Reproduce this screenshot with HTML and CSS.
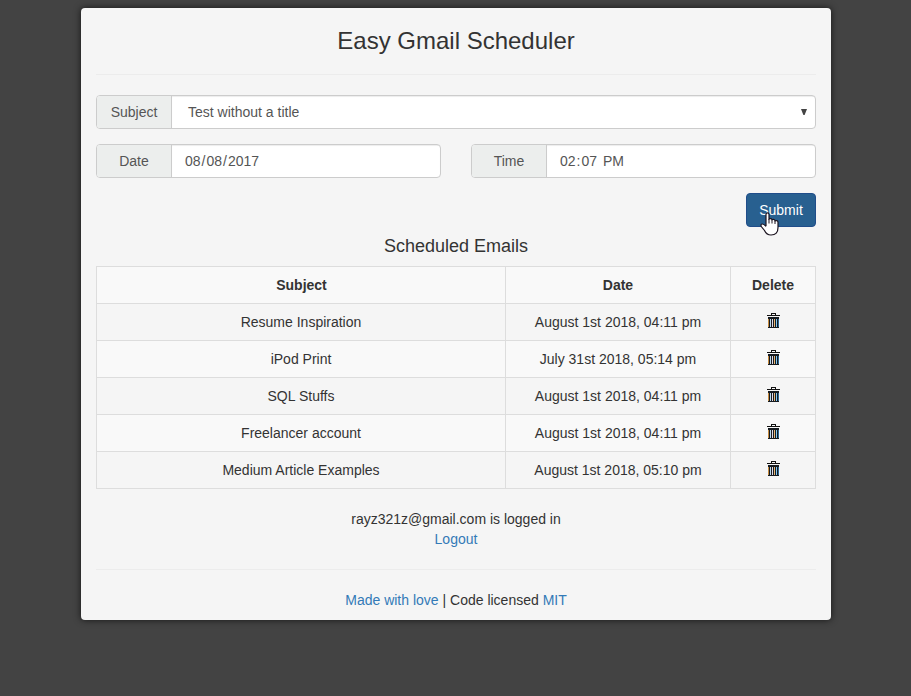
FILE: index.html
```html
<!DOCTYPE html>
<html lang="en">
<head>
<meta charset="utf-8">
<title>Easy Gmail Scheduler</title>
<link rel="stylesheet" href="styles.css">
</head>
<body>
<svg class="sprite" aria-hidden="true">
  <symbol id="trash" viewBox="0 0 13 15">
    <path d="M4 0h5v2h4v1H0V2h4zM5 1v1h3V1z" fill-rule="evenodd" fill="#111"/>
    <path d="M1 4h11v11H1z" fill="#161b20"/>
    <path d="M1 6h1v8H1z" fill="#c58a3e"/>
    <path d="M3 6h1v8H3z" fill="#b9d8ee"/>
    <path d="M5 6h1v8H5z" fill="#e4dcea"/>
    <path d="M7 6h1v8H7z" fill="#e8b878"/>
    <path d="M9 6h1v8H9z" fill="#83c9f2"/>
    <path d="M11 6h1v8h-1z" fill="#2a6592"/>
  </symbol>
</svg>
<main class="card">
  <h1>Easy Gmail Scheduler</h1>
  <hr>
  <form class="form">
    <div class="group">
      <span class="addon">Subject</span>
      <div class="control select">Test without a title<svg class="arrow" viewBox="0 0 6 6"><path d="M0 0h6L3.6 6H2.4z"/></svg></div>
    </div>
    <div class="pair">
      <div class="group">
        <span class="addon">Date</span>
        <div class="control"><span class="seg">08</span>/<span class="seg">08</span>/<span class="seg">2017</span></div>
      </div>
      <div class="group">
        <span class="addon">Time</span>
        <div class="control"><span class="seg">02</span>:<span class="seg">07</span>&nbsp;<span class="seg">PM</span></div>
      </div>
    </div>
    <button class="submit" type="button">Submit
      <svg class="pointer" viewBox="0 0 19 24"><path d="M6 14V2.500Q6 .8 7.500 .8T9 2.500V7Q11.500 5.800 12 7.800 14.500 6.800 15 8.800 18 8 18 10.500V15.500Q18 23 11 23 6.500 23 4.500 18.500L1.300 14.500Q.3 12 2.300 12 4 12 6 14.500" fill="#fff" stroke="#1c1420" stroke-width="1.200"/><path d="M9 7v4.500M12 8v3.500M15 9v3" fill="none" stroke="#1c1420"/></svg>
    </button>
  </form>
  <h2>Scheduled Emails</h2>
  <table>
    <colgroup><col class="c-subject"><col class="c-date"><col class="c-delete"></colgroup>
    <tr><th>Subject</th><th>Date</th><th>Delete</th></tr>
    <tr><td>Resume Inspiration</td><td>August 1st 2018, 04:11 pm</td><td><svg class="trash"><use href="#trash"/></svg></td></tr>
    <tr><td>iPod Print</td><td>July 31st 2018, 05:14 pm</td><td><svg class="trash"><use href="#trash"/></svg></td></tr>
    <tr><td>SQL Stuffs</td><td>August 1st 2018, 04:11 pm</td><td><svg class="trash"><use href="#trash"/></svg></td></tr>
    <tr><td>Freelancer account</td><td>August 1st 2018, 04:11 pm</td><td><svg class="trash"><use href="#trash"/></svg></td></tr>
    <tr><td>Medium Article Examples</td><td>August 1st 2018, 05:10 pm</td><td><svg class="trash"><use href="#trash"/></svg></td></tr>
  </table>
  <div class="account">rayz321z@gmail.com is logged in<br><a>Logout</a></div>
  <hr>
  <footer><a>Made with love</a> | Code licensed <a>MIT</a></footer>
</main>
</body>
</html>
```
FILE: styles.css
```css
* { box-sizing: border-box; }
body {
  margin: 0;
  min-height: 696px;
  padding-top: 8px;
  background: #434343;
  color: #333;
  font: 14px/20px "Liberation Sans", Arial, sans-serif;
  text-align: center;
}
.sprite { position: absolute; width: 0; height: 0; }
.card {
  width: 750px;
  height: 612px;
  margin-left: 81px;
  padding: 20px 15px 0;
  background: #f5f5f5;
  border-radius: 4px;
  box-shadow: 0 0 7px rgba(0, 0, 0, .7);
}
h1, h2 { margin: 0; font-weight: 400; }
h1 { font-size: 24px; line-height: 26px; }
h2 { font-size: 18px; line-height: 20px; margin: 9px 0 10px; }
hr { height: 1px; margin: 20px 0; border: 0; background: #ececec; }
.form { display: flex; flex-direction: column; gap: 15px; }
.group {
  display: flex;
  height: 34px;
  flex: 1 0 34px;
  border: 1px solid #ccc;
  border-radius: 4px;
  background: #fff;
  color: #555;
  overflow: hidden;
}
.addon {
  width: 75px;
  padding: 6px 0;
  background: #eceeed;
  border-right: 1px solid #ccc;
}
.control {
  flex: 1;
  padding: 6px 12px;
  text-align: left;
  box-shadow: inset 0 1px 1px rgba(0, 0, 0, .075);
}
.select { display: flex; justify-content: space-between; align-items: center; padding: 6px 8px 6px 16px; }
.arrow { width: 6px; height: 6px; fill: #444; }
.seg { padding: 0 1px; }
.pair { display: flex; gap: 30px; }
.submit {
  position: relative;
  align-self: flex-end;
  width: 70px;
  height: 34px;
  padding: 0;
  border: 1px solid #204d8a;
  border-radius: 4px;
  background: #286090;
  color: #fff;
  font: inherit;
}
.pointer { position: absolute; left: 13px; top: 18px; width: 19px; height: 24px; }
table { width: 719px; table-layout: fixed; border-collapse: collapse; }
.c-subject { width: 409px; }
.c-date { width: 225px; }
.c-delete { width: 85px; }
tr { height: 37px; }
tr:nth-child(odd) { background: #f9f9f9; }
th, td { padding: 0; border: 1px solid #ddd; }
th:first-child { padding-left: 1px; }
.trash { display: block; width: 13px; height: 15px; margin: -3px auto 0; position: relative; left: .5px; }
.account { margin-top: 20px; }
a { color: #337ab7; }
```
